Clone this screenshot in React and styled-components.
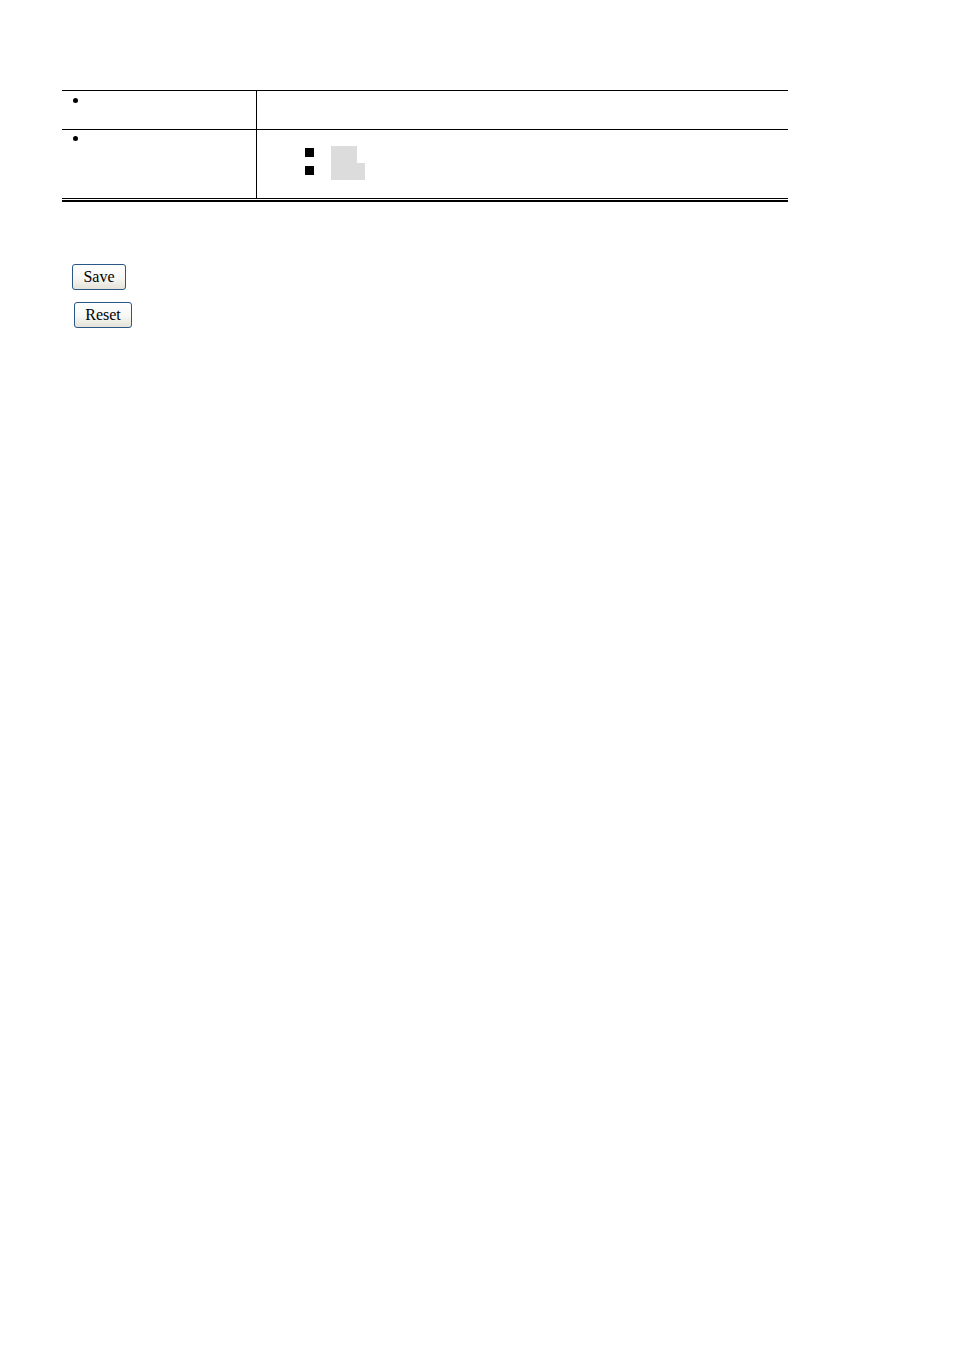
import styled, { createGlobalStyle } from "styled-components";

const Global = createGlobalStyle`
  body {
    margin: 0;
    background: #ffffff;
    font-family: "Liberation Serif", serif;
    color: #000000;
  }
`;

const Page = styled.div`
  padding: 90px 0 0 62px;
`;

const Table = styled.div`
  width: 726px;
`;

const Row = styled.div`
  display: grid;
  grid-template-columns: 195px 1fr;
  border-top: 1px solid #000000;
  height: ${(p) => p.height}px;
`;

const LeftCell = styled.div`
  box-sizing: border-box;
  border-right: 1px solid #000000;
  padding: ${(p) => p.top}px 0 0 11px;
`;

const RightCell = styled.div`
  padding: 16px 0 0 48px;
`;

const Dot = styled.span`
  display: block;
  width: 5px;
  height: 5px;
  border-radius: 50%;
  background: #000000;
`;

const SubList = styled.ul`
  list-style: none;
  margin: 0;
  padding: 0;
`;

const SubItem = styled.li`
  display: flex;
  align-items: flex-start;
  height: 17px;
`;

const Square = styled.span`
  width: 9px;
  height: 9px;
  margin-top: ${(p) => p.top}px;
  margin-right: 17px;
  background: #000000;
`;

const Blank = styled.span`
  width: ${(p) => p.width}px;
  height: 17px;
  background: #dcdcdc;
`;

const DoubleRule = styled.div`
  height: 1px;
  border-top: 1px solid #000000;
  border-bottom: 2px solid #000000;
`;

const Buttons = styled.div`
  display: flex;
  flex-direction: column;
  align-items: flex-start;
  gap: 12px;
  margin-top: 62px;
`;

const Button = styled.button`
  box-sizing: border-box;
  width: ${(p) => p.width}px;
  height: 26px;
  margin-left: ${(p) => p.indent}px;
  padding: 0;
  border: 1px solid #2a5788;
  border-radius: 3px;
  background: linear-gradient(#ffffff 0%, #f7f7f4 55%, #e4e2d8 100%);
  font-family: "Liberation Serif", serif;
  font-size: 16px;
  color: #000000;
  line-height: 24px;
`;

export default function App() {
  return (
    <>
      <Global />
      <Page>
        <Table>
          <Row height={38}>
            <LeftCell top={7}>
              <Dot />
            </LeftCell>
            <RightCell />
          </Row>
          <Row height={68}>
            <LeftCell top={6}>
              <Dot />
            </LeftCell>
            <RightCell>
              <SubList>
                <SubItem>
                  <Square top={2} />
                  <Blank width={26} />
                </SubItem>
                <SubItem>
                  <Square top={3} />
                  <Blank width={34} />
                </SubItem>
              </SubList>
            </RightCell>
          </Row>
          <DoubleRule />
        </Table>
        <Buttons>
          <Button width={54} indent={10}>Save</Button>
          <Button width={58} indent={12}>Reset</Button>
        </Buttons>
      </Page>
    </>
  );
}
